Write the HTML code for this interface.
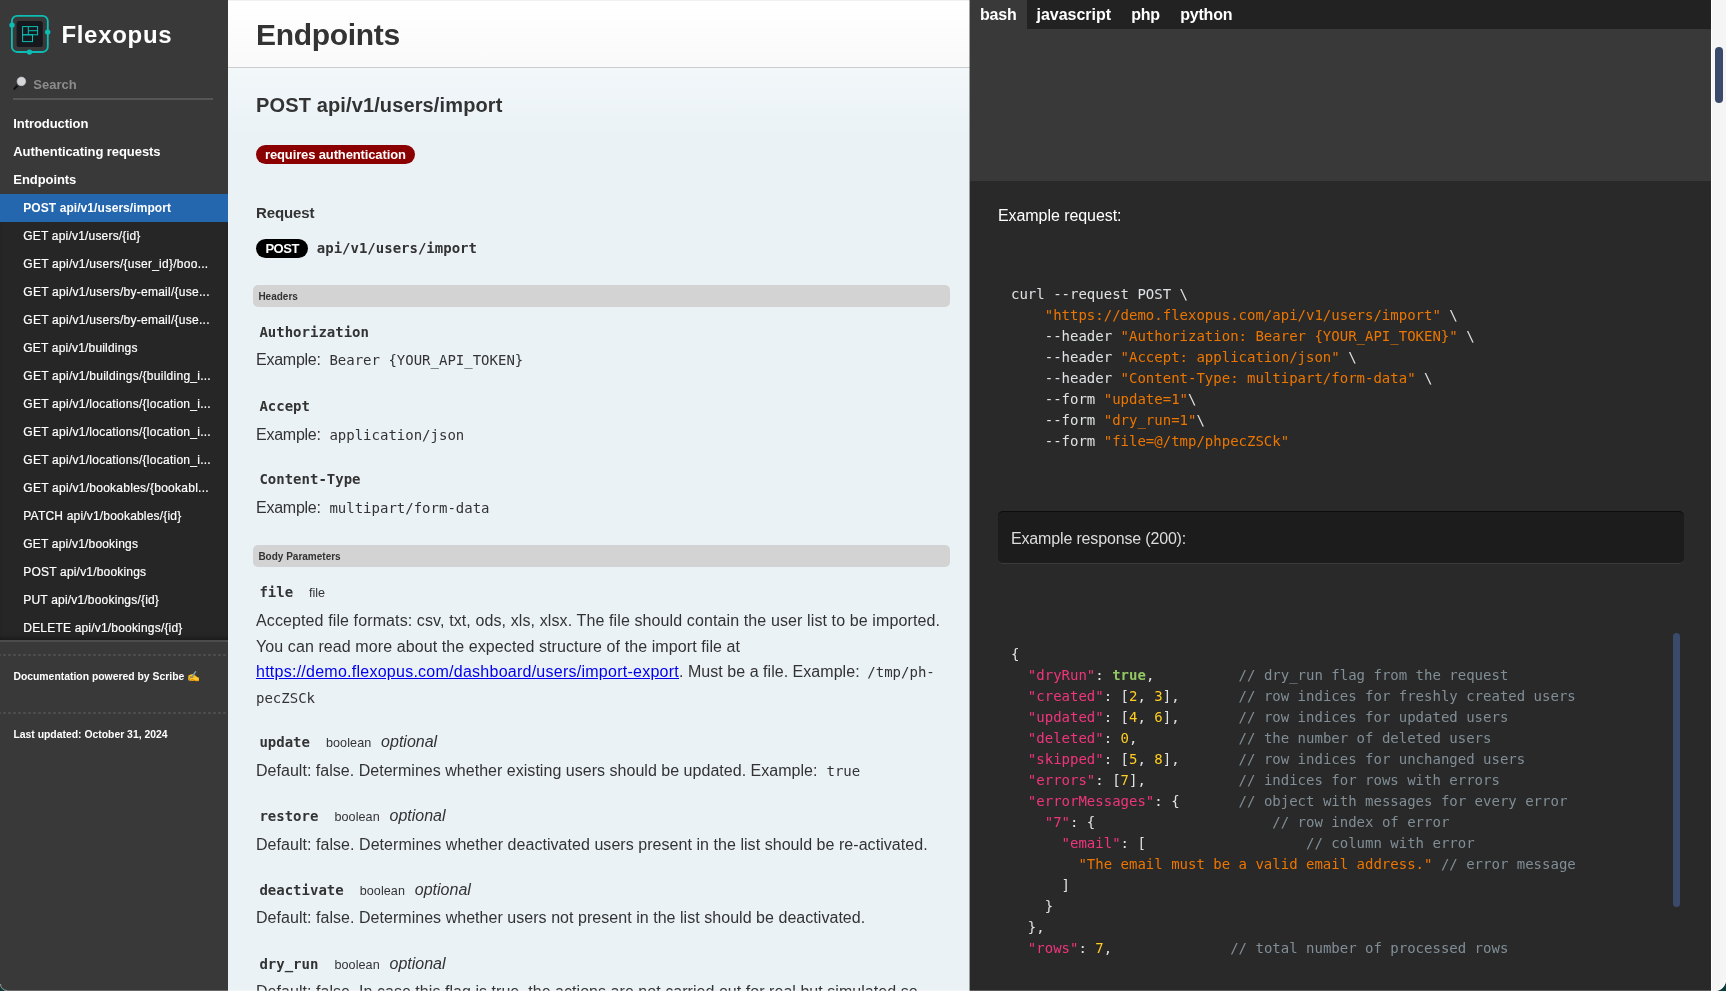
<!DOCTYPE html>
<html lang="en">
<head>
<meta charset="utf-8">
<title>Flexopus API Documentation</title>
<style>
*{box-sizing:border-box}
html,body{margin:0;padding:0;width:1726px;height:991px;overflow:hidden;background:#eaf2f6;color:#333;
  font-family:"Liberation Sans",Arial,Helvetica,sans-serif;font-size:14px}
code,pre,.mono{font-family:"DejaVu Sans Mono","Liberation Mono",monospace}
a{color:#0000ee}

/* ---------- sidebar ---------- */
#sidebar,#main,#dark{will-change:transform}
#sidebar{position:absolute;left:0;top:0;width:228px;height:991px;background:#393939;color:#fff;font-size:13px;font-weight:bold;overflow:hidden}
#logo{position:absolute;left:10px;top:14px;width:42px;height:42px;overflow:visible}
#brand{position:absolute;left:61.4px;top:17px;font-size:24px;line-height:36px;font-weight:bold;color:#fff;letter-spacing:.7px;white-space:nowrap}
#search{position:absolute;left:13px;top:70px;width:200px;height:30px;border-bottom:2px solid #555}
#search .ico{position:absolute;left:0;top:6px;width:14px;height:16px}
#search span{position:absolute;left:20.3px;top:7px;line-height:16px;color:#8c8c8c;font-size:13px}
#toc{position:absolute;left:0;top:110px;width:228px;margin:0;padding:0;list-style:none}
#toc li{height:28px;line-height:28px;padding-left:13.3px;white-space:nowrap;letter-spacing:-.07px}
#sub{position:absolute;left:0;top:194px;width:228px;height:446px;margin:0;padding:0;list-style:none;background:#262626;font-weight:normal;font-size:12px;letter-spacing:.19px;box-shadow:0 2px 0 #4c4c4c,inset 0 -4px 4px -2px rgba(0,0,0,.35);-webkit-text-stroke:.2px #fff}
#sub li{height:28px;line-height:28px;padding-left:23.3px;white-space:nowrap;overflow:hidden}
#sub li.tr{letter-spacing:.26px}
#sub li.active{background:#2467af;font-weight:bold;letter-spacing:.07px;-webkit-text-stroke:0}
#foot{position:absolute;left:0;top:654px;width:228px;margin:0;padding:0;list-style:none;font-size:10.4px}
#foot li{height:57.5px;background:repeating-linear-gradient(to right,#4b4b4b 0 3px,transparent 3px 5px) -2px 0/100% 2px no-repeat;padding:16px 13.4px 0;line-height:13px;white-space:nowrap}

/* ---------- main content ---------- */
#main{position:absolute;left:228px;top:0;width:742px;height:991px;background:#eaf2f6;overflow:hidden}
#main h1{margin:0;height:68px;padding:0 28px;font-size:30px;line-height:67px;border-top:1px solid #f0f0f0;font-weight:bold;color:#333;
  background:linear-gradient(to bottom,#fff,#f9f9f9);border-bottom:1px solid #ccc}
#h2grad{position:absolute;left:0;top:68px;width:742px;height:72px;background:linear-gradient(to bottom,rgba(255,255,255,.4),rgba(255,255,255,0))}
.r{position:absolute;left:28px;margin:0;white-space:nowrap;color:#333}
#main h2{font-size:20px;font-weight:bold;line-height:30px}
#main h3{font-size:15px;font-weight:bold;line-height:20px}
.badge{display:inline-block;color:#fff;font-weight:bold;font-size:13px;line-height:19px;height:19px;border-radius:10px;vertical-align:top}
.badge.auth{background:#8b0000;padding:0 9px;letter-spacing:-.13px;width:159px}
.badge.post{background:#000;padding:0 9.4px;letter-spacing:-.45px;width:52.4px;height:19px;line-height:19.6px}
.ep{font-size:14px;font-weight:bold;margin-left:8.4px;line-height:18.4px;vertical-align:top;display:inline-block}
.bar{position:absolute;left:25px;width:697px;height:22px;margin:0;background:#d3d3d3;border-radius:5px;font-size:10px;font-weight:bold;line-height:22px;padding-left:5.4px;color:#333}
.nm{font-size:16px;line-height:26px}
.pname{font-family:"DejaVu Sans Mono","Liberation Mono",monospace;font-weight:bold;font-size:14px;margin-left:3.4px}
.ptype{font-size:12.6px;margin-left:16px;letter-spacing:.07px}
.popt{font-size:16px;font-style:italic;margin-left:9.8px}
.ex{font-size:16px;line-height:25.6px}
.ex code{font-size:14px;margin-left:8.7px}
.exl{letter-spacing:-.25px}
a{color:#0000ee;text-decoration:underline}

/* ---------- dark panel ---------- */
#dark{position:absolute;left:970px;top:0;width:741px;height:991px;background:#292929;color:#fff;box-shadow:-1px 0 0 rgba(50,50,50,.45)}
#langs{position:absolute;left:0;top:0;width:741px;height:29px;background:#222}
#langs span{display:inline-block;height:29px;line-height:29px;padding:0;text-align:center;font-weight:bold;font-size:16px;color:#fff;float:left}
#langs span.on{background:#393939}
#band{position:absolute;left:0;top:29px;width:741px;height:152px;background:#393939}
#exreq{position:absolute;left:28px;top:203px;margin:0;font-size:16px;line-height:25.6px;color:#fff;letter-spacing:-.07px;white-space:nowrap}
#dark pre{position:absolute;left:41px;margin:0;font-size:14px;line-height:21px;color:#e0e2e4;white-space:pre}
#dark pre code{font-size:14px}
#curl{top:284px}
#json{top:644px}
.s{color:#ec7600}.k{color:#f0357c}.n{color:#ffcd22}.t{color:#93c763;font-weight:bold}.c{color:#818e96}
#resp{position:absolute;left:28px;top:511px;width:685.5px;height:52.5px;margin:0;background:#1c1c1c;border-radius:5px;border-top:1px solid #0c0c0c;border-bottom:1px solid #3c3c3c;padding:0 0 0 13px}
#resp p{margin:0;font-size:16px;line-height:25.6px;padding-top:14px;color:#ddd;letter-spacing:-.16px;white-space:nowrap}
#ithumb{position:absolute;left:702.5px;top:633px;width:7.5px;height:274px;border-radius:4px;background:#3b4a6b}

/* ---------- page scrollbar ---------- */
#sb{position:absolute;left:1711px;top:0;width:15px;height:991px;background:#f5f5f5;border-left:1px solid #fff}
#sb i{position:absolute;left:3px;top:47px;width:8px;height:56px;border-radius:4px;background:#3b4a6b}
#winb{position:absolute;left:0;top:990px;width:1726px;height:1px;background:rgba(255,255,255,.24)}
.corner{position:absolute;top:984px;width:7px;height:7px;overflow:hidden}
.corner i{position:absolute;width:14px;height:14px;border-radius:7px;box-shadow:0 0 0 8px #0e3b3a;top:-7px;border:1px solid #9a9a9a}
</style>
</head>
<body>
<div id="sidebar">
  <svg id="logo" viewBox="0 0 42 42">
    <rect x="1.9" y="1.8" width="35.9" height="36.2" rx="5.2" fill="none" stroke="#0bbdb4" stroke-width="1.8"/>
    <rect x="6.6" y="7" width="26.2" height="26.1" rx="2.6" fill="#17181d"/>
    <circle cx="2" cy="11.1" r="2.7" fill="#0bbdb4"/>
    <circle cx="37.7" cy="18.1" r="2.7" fill="#0bbdb4"/>
    <circle cx="19.5" cy="38.1" r="2.7" fill="#0bbdb4"/>
    <g fill="none" stroke="#0bbdb4" stroke-width="1">
      <rect x="12.6" y="12.6" width="15" height="8.2"/>
      <path d="M18.3 12.6v8.2M18.3 16.7h9.3"/>
      <rect x="12.6" y="20.8" width="9.9" height="6.8"/>
    </g>
  </svg>
  <div id="brand">Flexopus</div>
  <div id="search"><svg class="ico" viewBox="0 0 14 16">
      <path d="M1.4 12.9L5.2 8.7" stroke="#0d0f14" stroke-width="2.1" stroke-linecap="round"/>
      <path d="M4.6 9.3L6 7.8" stroke="#9aa3ad" stroke-width="1.2"/>
      <circle cx="8.4" cy="5.4" r="4.3" fill="#d6d6d6" stroke="#b9c3cf" stroke-width=".7"/>
    </svg><span>Search</span></div>
  <ul id="toc">
    <li>Introduction</li>
    <li>Authenticating requests</li>
    <li>Endpoints</li>
  </ul>
  <ul id="sub">
    <li class="active">POST api/v1/users/import</li>
    <li>GET api/v1/users/{id}</li>
    <li class="tr">GET api/v1/users/{user_id}/boo...</li>
    <li class="tr">GET api/v1/users/by-email/{use...</li>
    <li class="tr">GET api/v1/users/by-email/{use...</li>
    <li>GET api/v1/buildings</li>
    <li class="tr">GET api/v1/buildings/{building_i...</li>
    <li class="tr">GET api/v1/locations/{location_i...</li>
    <li class="tr">GET api/v1/locations/{location_i...</li>
    <li class="tr">GET api/v1/locations/{location_i...</li>
    <li class="tr">GET api/v1/bookables/{bookabl...</li>
    <li>PATCH api/v1/bookables/{id}</li>
    <li>GET api/v1/bookings</li>
    <li>POST api/v1/bookings</li>
    <li>PUT api/v1/bookings/{id}</li>
    <li>DELETE api/v1/bookings/{id}</li>
  </ul>
  <ul id="foot">
    <li>Documentation powered by Scribe ✍</li>
    <li>Last updated: October 31, 2024</li>
  </ul>
</div>

<div id="main">
  <h1><span style="letter-spacing:-.3px">Endpoints</span></h1>
  <div id="h2grad"></div>
  <h2 class="r" style="top:90px;letter-spacing:.13px">POST api/v1/users/import</h2>
  <p class="r" style="top:145px"><small class="badge auth">requires authentication</small></p>
  <h3 class="r" style="top:203px;letter-spacing:-.11px">Request</h3>
  <p class="r" style="top:239px"><small class="badge post">POST</small><b class="mono ep">api/v1/users/import</b></p>

  <h4 class="bar" style="top:284.5px;line-height:24px">Headers</h4>
  <div class="r nm" style="top:319px"><b class="pname">Authorization</b></div>
  <p class="r ex" style="top:347px"><span class="exl">Example:</span><code>Bearer {YOUR_API_TOKEN}</code></p>
  <div class="r nm" style="top:393px"><b class="pname">Accept</b></div>
  <p class="r ex" style="top:422px"><span class="exl">Example:</span><code>application/json</code></p>
  <div class="r nm" style="top:466px"><b class="pname">Content-Type</b></div>
  <p class="r ex" style="top:495px"><span class="exl">Example:</span><code>multipart/form-data</code></p>

  <h4 class="bar" style="top:545.3px;line-height:24px">Body Parameters</h4>
  <div class="r nm" style="top:579px"><b class="pname">file</b><small class="ptype" style="letter-spacing:-.08px">file</small></div>
  <p class="r ex" style="top:608px;letter-spacing:.112px">Accepted file formats: csv, txt, ods, xls, xlsx. The file should contain the user list to be imported.</p>
  <p class="r ex" style="top:633.6px;letter-spacing:.091px">You can read more about the expected structure of the import file at</p>
  <p class="r ex" style="top:659.2px"><a style="letter-spacing:.253px">https://demo.flexopus.com/dashboard/users/import-export</a><span style="letter-spacing:.037px">. Must be a file. Example:</span><code style="margin-left:7.7px">/tmp/ph-</code></p>
  <p class="r ex" style="top:684.8px"><code style="margin:0">pecZSCk</code></p>

  <div class="r nm" style="top:729.4px"><b class="pname">update</b><small class="ptype">boolean</small><i class="popt">optional</i></div>
  <p class="r ex" style="top:758px"><span style="letter-spacing:.027px">Default: false. Determines whether existing users should be updated. Example:</span><code style="margin-left:9px">true</code></p>
  <div class="r nm" style="top:803.2px"><b class="pname">restore</b><small class="ptype">boolean</small><i class="popt">optional</i></div>
  <p class="r ex" style="top:831.6px;letter-spacing:.048px">Default: false. Determines whether deactivated users present in the list should be re-activated.</p>
  <div class="r nm" style="top:877px"><b class="pname">deactivate</b><small class="ptype">boolean</small><i class="popt">optional</i></div>
  <p class="r ex" style="top:905.4px;letter-spacing:.041px">Default: false. Determines whether users not present in the list should be deactivated.</p>
  <div class="r nm" style="top:950.8px"><b class="pname">dry_run</b><small class="ptype">boolean</small><i class="popt">optional</i></div>
  <p class="r ex" style="top:979.2px;letter-spacing:.044px">Default: false. In case this flag is true, the actions are not carried out for real but simulated so</p>
</div>

<div id="dark">
  <div id="langs"><span class="on" style="letter-spacing:-.24px;width:56.5px">bash</span><span style="letter-spacing:-.03px;width:94.5px">javascript</span><span style="letter-spacing:-.34px;width:49px">php</span><span style="letter-spacing:-.19px;width:72.5px">python</span></div>
  <div id="band"></div>
  <p id="exreq">Example request:</p>
<pre id="curl"><code>curl --request POST \
    <span class="s">"https://demo.flexopus.com/api/v1/users/import"</span> \
    --header <span class="s">"Authorization: Bearer {YOUR_API_TOKEN}"</span> \
    --header <span class="s">"Accept: application/json"</span> \
    --header <span class="s">"Content-Type: multipart/form-data"</span> \
    --form <span class="s">"update=1"</span>\
    --form <span class="s">"dry_run=1"</span>\
    --form <span class="s">"file=@/tmp/phpecZSCk"</span></code></pre>
  <blockquote id="resp"><p>Example response (200):</p></blockquote>
<pre id="json"><code>{
  <span class="k">"dryRun"</span>: <span class="t">true</span>,          <span class="c">// dry_run flag from the request</span>
  <span class="k">"created"</span>: [<span class="n">2</span>, <span class="n">3</span>],       <span class="c">// row indices for freshly created users</span>
  <span class="k">"updated"</span>: [<span class="n">4</span>, <span class="n">6</span>],       <span class="c">// row indices for updated users</span>
  <span class="k">"deleted"</span>: <span class="n">0</span>,            <span class="c">// the number of deleted users</span>
  <span class="k">"skipped"</span>: [<span class="n">5</span>, <span class="n">8</span>],       <span class="c">// row indices for unchanged users</span>
  <span class="k">"errors"</span>: [<span class="n">7</span>],           <span class="c">// indices for rows with errors</span>
  <span class="k">"errorMessages"</span>: {       <span class="c">// object with messages for every error</span>
    <span class="k">"7"</span>: {                     <span class="c">// row index of error</span>
      <span class="k">"email"</span>: [                   <span class="c">// column with error</span>
        <span class="s">"The email must be a valid email address."</span> <span class="c">// error message</span>
      ]
    }
  },
  <span class="k">"rows"</span>: <span class="n">7</span>,              <span class="c">// total number of processed rows</span></code></pre>
  <div id="ithumb"></div>
</div>

<div id="sb"><i></i></div>
<div id="winb"></div>
<div class="corner" style="left:0"><i style="left:0"></i></div>
<div class="corner" style="left:1715px;top:980px;width:11px;height:11px"><i style="left:-11px;top:-11px;width:22px;height:22px;border-radius:11px;border-color:#fff"></i></div>
</body>
</html>
